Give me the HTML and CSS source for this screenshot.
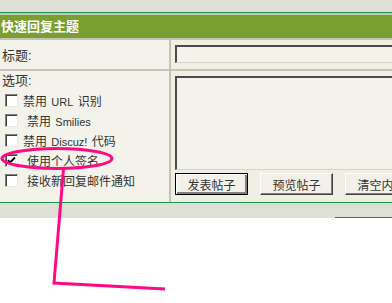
FILE: index.html
```html
<!DOCTYPE html>
<html>

<head>
  <meta charset="UTF-8" />
  <title>快速回复主题</title>
  <link rel="stylesheet" href="styles.css">
</head>

<body>
  <div class="topbar"></div>
  <div class="reply">
    <div class="reply-title">快速回复主题</div>
    <div class="reply-grid">
      <div class="cell label">标题:</div>
      <div class="cell field">
        <span class="textbox"></span>
      </div>
      <div class="cell options">
        <div class="options-title">选项:</div>
        <div class="opt"><span class="check"></span><span class="text">禁用 <span class="en">URL</span> 识别</span></div>
        <div class="opt"><span class="check"></span><span class="text pad">禁用 <span class="en">Smilies</span></span></div>
        <div class="opt"><span class="check"></span><span class="text">禁用 <span class="en">Discuz!</span> 代码</span></div>
        <div class="opt">
          <span class="check">
            <svg width="11" height="11" viewBox="0 0 11 11">
              <polyline points="2,5 4,7.5 9,2.5" fill="none" stroke="#000" stroke-width="2" />
            </svg>
          </span>
          <span class="text pad">使用个人签名</span>
        </div>
        <div class="opt"><span class="check"></span><span class="text pad">接收新回复邮件通知</span></div>
      </div>
      <div class="cell editor">
        <div class="textarea"></div>
        <div class="buttons">
          <button class="btn btn-default">发表帖子</button>
          <button class="btn">预览帖子</button>
          <button class="btn">清空内容</button>
        </div>
      </div>
    </div>
  </div>
  <div class="footer">
    <span class="footer-line"></span>
  </div>

  <!-- hand-drawn note on top of the form -->
  <svg class="note" width="392" height="303" viewBox="0 0 392 303">
    <ellipse cx="57" cy="158.5" rx="55" ry="10" fill="none" stroke="#ff0a84" stroke-width="3" />
    <polyline points="63.5,169 54,283 165,289" fill="none" stroke="#ff0a84" stroke-width="3" />
  </svg>
</body>

</html>
```

FILE: styles.css
```css
html,
body {
  overflow: hidden;
}

body {
  margin: 0;
  width: 392px;
  height: 303px;
  background: #fff;
  font-family: "Liberation Sans", "Noto Sans CJK SC", sans-serif;
  font-size: 12px;
  color: #333;
  position: relative;
}

.topbar {
  height: 12px;
  background: #dfdfd5;
}

.reply {
  border-top: 1px solid #0f9a4c;
  border-bottom: 1px solid #0f9a4c;
  background: #c4c4b4;
  padding-top: 2px;
  display: grid;
  gap: 2px;
}

.reply-title {
  height: 23px;
  line-height: 23px;
  background: #799e31;
  color: #fff;
  font-weight: bold;
  font-size: 13px;
  padding-left: 1px;
}

.reply-grid {
  display: grid;
  grid-template-columns: 169px 1fr;
  grid-template-rows: 29px 131px;
  gap: 2px;
}

.cell {
  background: #f3f3eb;
  overflow: hidden;
}

.label {
  display: flex;
  align-items: center;
  padding-left: 2px;
  font-size: 13px;
}

.field,
.editor {
  background: #efefe3;
  padding: 5px 0 0 4px;
}

.textbox {
  display: block;
  width: 300px;
  height: 15px;
  background: #f3f3eb;
  border-top: 2px solid #4a4a4a;
  border-left: 2px solid #4a4a4a;
  border-bottom: 1px solid #d4d4c8;
}

.options {
  padding-top: 1px;
}

.options-title {
  line-height: 18px;
  font-size: 13px;
  padding-left: 2px;
}

.opt {
  display: flex;
  align-items: center;
  height: 20px;
  padding-left: 5px;
  white-space: nowrap;
}

.check {
  flex: none;
  width: 11px;
  height: 11px;
  margin-right: 5px;
  background: #fff;
  border-top: 1px solid #808080;
  border-left: 1px solid #808080;
  border-right: 1px solid #e8e8e0;
  border-bottom: 1px solid #e8e8e0;
  box-shadow: inset 1px 1px 0 #404040;
}

.check svg {
  display: block;
}

.pad {
  padding-left: 4px;
}

.en {
  font-size: 11px;
  padding: 0 1px;
}

.textarea {
  width: 300px;
  height: 91px;
  background: #f3f3eb;
  border-top: 2px solid #4a4a4a;
  border-left: 2px solid #4a4a4a;
  border-bottom: 1px solid #d4d4c8;
}

.buttons {
  display: flex;
  gap: 12px;
  margin-top: 3px;
}

.btn {
  flex: none;
  width: 73px;
  height: 22px;
  padding: 0;
  background: #f1f1e9;
  font-family: "Liberation Sans", "Noto Sans CJK SC", sans-serif;
  font-size: 12px;
  color: #333;
  border: 1px solid;
  border-color: #fff #404040 #404040 #fff;
  box-shadow: inset -1px -1px 0 #808080;
}

.btn-default {
  border: 1px solid #000;
  box-shadow: inset 1px 1px 0 #fff, inset -2px -2px 0 #808080;
}

.footer {
  height: 15px;
  background: #dfdfd5;
  display: flex;
  justify-content: flex-end;
  align-items: flex-end;
}

.footer-line {
  width: 57px;
  height: 1px;
  background: #1d8a4c;
}

.note {
  position: absolute;
  top: 0;
  left: 0;
  pointer-events: none;
}
```
